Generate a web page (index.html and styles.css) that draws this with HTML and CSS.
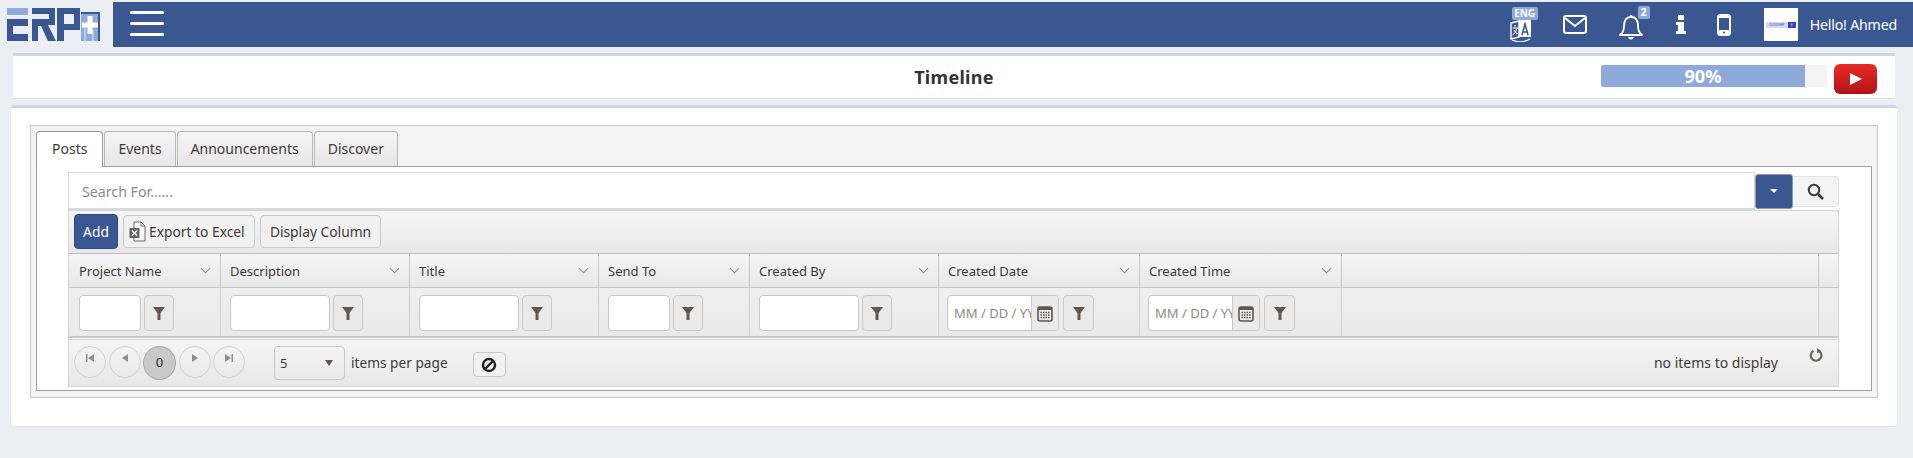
FILE: index.html
```html
<!DOCTYPE html>
<html lang="en">

<head>
    <meta charset="UTF-8">
    <title>Timeline</title>
    <link rel="stylesheet" href="styles.css">
</head>

<body>
    <header class="topbar">
        <div class="logo-box">
            <svg width="94" height="34" viewBox="0 0 94 34">
                <rect x="0" y="0" width="21" height="7" fill="#8eaadb"/>
                <path d="M0 11H21V18H6V26H21V33H0Z" fill="#3a5791"/>
                <path d="M25 0H48V17H41L49 33H41L34 18H31V33H25V11H42V6H25Z" fill="#3a5791"/>
                <path d="M50 0H73V22H57V33H50ZM57 6V16H67V6Z" fill="#3a5791"/>
                <rect x="74" y="4" width="19" height="29" fill="#8eaadb"/>
                <rect x="74" y="4" width="19" height="2" fill="#3a5791"/>
                <rect x="91" y="4" width="2" height="29" fill="#3a5791"/>
                <rect x="77" y="20" width="2" height="13" fill="#bccdec"/>
                <rect x="85" y="22" width="2" height="11" fill="#bccdec"/>
                <path d="M83 8V26M75 17H91" stroke="#fff" stroke-width="5" fill="none"/>
            </svg>
        </div>
        <div class="navbar">
            <button class="burger"><span></span><span></span><span></span></button>
            <div class="nav-right">
                <div class="nav-icon lang-icon">
                    <svg width="24" height="28" viewBox="0 0 24 28">
                        <path d="M2 9L10 7V23L2 25Z" fill="none" stroke="#fff" stroke-width="1.4"/>
                        <path d="M10 6H22V23H10Z" fill="#fff"/>
                        <path d="M3.5 14H9M6 11V13M8 14Q7 19 3.5 21M5 16Q6 19 9 20" fill="none" stroke="#fff" stroke-width="1"/>
                        <path d="M13 21L16 10L19 21M14 18H18" fill="none" stroke="#3a5791" stroke-width="1.6"/>
                        <path d="M3 26Q12 30 21 25" fill="none" stroke="#fff" stroke-width="1.2"/>
                    </svg>
                    <span class="badge badge-eng">ENG</span>
                </div>
                <div class="nav-icon mail-icon">
                    <svg width="24" height="20" viewBox="0 0 24 20">
                        <rect x="1" y="1" width="22" height="17" rx="2" fill="none" stroke="#fff" stroke-width="2"/>
                        <path d="M2 3L12 11L22 3" fill="none" stroke="#fff" stroke-width="2"/>
                    </svg>
                </div>
                <div class="nav-icon bell-icon">
                    <svg width="24" height="25" viewBox="0 0 24 25">
                        <path d="M12 2Q19 2 19 11Q19 17 23 20H1Q5 17 5 11Q5 2 12 2Z" fill="none" stroke="#fff" stroke-width="1.8" stroke-linejoin="round"/>
                        <path d="M9 22H15Q14 24.500 12 24.500Q10 24.500 9 22Z" fill="#fff"/>
                        <circle cx="12" cy="1.500" r="1.500" fill="#fff"/>
                    </svg>
                    <span class="badge badge-bell">2</span>
                </div>
                <div class="nav-icon info-icon">
                    <svg width="10" height="19" viewBox="0 0 10 19">
                        <rect x="2" y="0" width="6" height="5" fill="#fff"/>
                        <path d="M0 7H8V16H10V19H0V16H2V10H0Z" fill="#fff"/>
                    </svg>
                </div>
                <div class="nav-icon phone-icon">
                    <svg width="14" height="22" viewBox="0 0 14 22">
                        <rect x="1" y="1" width="12" height="20" rx="2.500" fill="none" stroke="#fff" stroke-width="2"/>
                        <rect x="1" y="16" width="12" height="5" rx="2" fill="#fff"/>
                        <rect x="1" y="1" width="12" height="3" rx="1.500" fill="#fff"/>
                        <circle cx="7" cy="18.500" r="1" fill="#3a5791"/>
                    </svg>
                </div>
                <div class="avatar"><span class="avatar-logo"><span>CLOUDERP</span><i>E</i></span></div>
                <span class="hello">Hello! Ahmed</span>
            </div>
        </div>
    </header>

    <section class="title-bar">
        <h1 class="page-title">Timeline</h1>
        <div class="progress"><div class="progress-fill">90%</div></div>
        <button class="yt-button">
            <svg width="12" height="12" viewBox="0 0 12 12"><path d="M0 0L12 6L0 12Z" fill="#fff"/></svg>
        </button>
    </section>

    <section class="card">
        <div class="tabstrip">
            <ul class="tabs">
                <li class="tab active">Posts</li>
                <li class="tab">Events</li>
                <li class="tab">Announcements</li>
                <li class="tab">Discover</li>
            </ul>
            <div class="tab-content">
                <div class="search-row">
                    <div class="search-input">Search For......</div>
                    <button class="drop-button"><i class="caret"></i></button>
                    <button class="search-button">
                        <svg width="17" height="17" viewBox="0 0 17 17">
                            <circle cx="7" cy="7" r="5.200" fill="none" stroke="#3c3c3c" stroke-width="2"/>
                            <path d="M11 11L16 16" stroke="#3c3c3c" stroke-width="2.600"/>
                        </svg>
                    </button>
                </div>
                <div class="grid">
                    <div class="toolbar">
                        <button class="btn btn-add">Add</button>
                        <button class="btn btn-export">
                            <svg width="17" height="21" viewBox="0 0 17 21">
                                <path d="M5 1H12L16 5V20H5Z" fill="#fff" stroke="#666" stroke-width="1"/>
                                <path d="M12 1V5H16" fill="none" stroke="#666"/>
                                <rect x="0.500" y="7" width="10" height="10" fill="#666"/>
                                <path d="M3 9.500L8 14.500M8 9.500L3 14.500" stroke="#fff" stroke-width="1.400"/>
                            </svg>
                            Export to Excel
                        </button>
                        <button class="btn btn-columns">Display Column</button>
                    </div>

                    <div class="head-row">
                        <div class="head-cell">Project Name<i class="chev"></i></div>
                        <div class="head-cell">Description<i class="chev"></i></div>
                        <div class="head-cell">Title<i class="chev"></i></div>
                        <div class="head-cell">Send To<i class="chev"></i></div>
                        <div class="head-cell">Created By<i class="chev"></i></div>
                        <div class="head-cell">Created Date<i class="chev"></i></div>
                        <div class="head-cell">Created Time<i class="chev"></i></div>
                        <div class="head-cell"></div>
                        <div class="head-cell"></div>
                    </div>

                    <div class="filter-row">
                        <div class="filter-cell first-cell">
                            <span class="f-input w62"></span>
                            <button class="f-btn"><svg class="funnel" viewBox="0 0 12 13"><path d="M0 0H12L7.500 6V13H4.500V6Z"/></svg></button>
                        </div>
                        <div class="filter-cell">
                            <span class="f-input w100"></span>
                            <button class="f-btn"><svg class="funnel" viewBox="0 0 12 13"><path d="M0 0H12L7.500 6V13H4.500V6Z"/></svg></button>
                        </div>
                        <div class="filter-cell">
                            <span class="f-input w100"></span>
                            <button class="f-btn"><svg class="funnel" viewBox="0 0 12 13"><path d="M0 0H12L7.500 6V13H4.500V6Z"/></svg></button>
                        </div>
                        <div class="filter-cell">
                            <span class="f-input w62"></span>
                            <button class="f-btn"><svg class="funnel" viewBox="0 0 12 13"><path d="M0 0H12L7.500 6V13H4.500V6Z"/></svg></button>
                        </div>
                        <div class="filter-cell">
                            <span class="f-input w100"></span>
                            <button class="f-btn"><svg class="funnel" viewBox="0 0 12 13"><path d="M0 0H12L7.500 6V13H4.500V6Z"/></svg></button>
                        </div>
                        <div class="filter-cell date-cell">
                            <span class="date-input"><input class="date-text" placeholder="MM / DD / YYYY"><span class="cal"><svg class="cal-icon" viewBox="0 0 16 17"><rect x="1" y="2" width="14" height="14" rx="2" fill="none" stroke="#5e5753" stroke-width="1.600"/><rect x="1" y="2" width="14" height="3" fill="#5e5753"/><path d="M3.500 7.500H12.500M3.500 10H12.500M3.500 12.500H12.500" stroke="#5e5753" stroke-width="1.500" stroke-dasharray="1.500 1"/></svg></span></span>
                            <button class="f-btn"><svg class="funnel" viewBox="0 0 12 13"><path d="M0 0H12L7.500 6V13H4.500V6Z"/></svg></button>
                        </div>
                        <div class="filter-cell date-cell">
                            <span class="date-input"><input class="date-text" placeholder="MM / DD / YYYY"><span class="cal"><svg class="cal-icon" viewBox="0 0 16 17"><rect x="1" y="2" width="14" height="14" rx="2" fill="none" stroke="#5e5753" stroke-width="1.600"/><rect x="1" y="2" width="14" height="3" fill="#5e5753"/><path d="M3.500 7.500H12.500M3.500 10H12.500M3.500 12.500H12.500" stroke="#5e5753" stroke-width="1.500" stroke-dasharray="1.500 1"/></svg></span></span>
                            <button class="f-btn"><svg class="funnel" viewBox="0 0 12 13"><path d="M0 0H12L7.500 6V13H4.500V6Z"/></svg></button>
                        </div>
                        <div class="filter-cell"></div>
                        <div class="filter-cell"></div>
                    </div>

                    <div class="pager">
                        <div class="pager-nums">
                            <button class="circle"><svg class="arrow" viewBox="0 0 8 8"><path d="M0 0H1.500V8H0ZM8 0V8L2 4Z"/></svg></button>
                            <button class="circle"><svg class="arrow" viewBox="0 0 8 8"><path d="M7 0V8L1 4Z"/></svg></button>
                            <button class="circle current">0</button>
                            <button class="circle"><svg class="arrow" viewBox="0 0 8 8"><path d="M1 0V8L7 4Z"/></svg></button>
                            <button class="circle"><svg class="arrow" viewBox="0 0 8 8"><path d="M8 0H6.500V8H8ZM0 0V8L6 4Z"/></svg></button>
                        </div>
                        <div class="page-size"><span>5</span><i class="size-caret"></i></div>
                        <span class="per-page">items per page</span>
                        <button class="clear-button">
                            <svg width="16" height="16" viewBox="0 0 16 16"><circle cx="8" cy="8" r="6" fill="none" stroke="#222" stroke-width="2.400"/><path d="M4 12L12 4" stroke="#222" stroke-width="2.400"/></svg>
                        </button>
                        <span class="no-items">no items to display</span>
                        <svg class="refresh" width="14" height="14" viewBox="0 0 14 14"><path d="M4.500 2.800A5.300 5.300 0 1 0 9 2.500" fill="none" stroke="#6b6663" stroke-width="2.200"/><path d="M8 0L12 3L8 5.500Z" fill="#6b6663"/></svg>
                    </div>
                </div>
            </div>
        </div>
    </section>
</body>

</html>
```

FILE: styles.css
```css
* {
    margin: 0;
    padding: 0;
    box-sizing: border-box;
}

body {
    background-color: #ebeef3;
    font-family: "Noto Sans", sans-serif;
    font-size: 14px;
    color: #3f3a38;
    height: 458px;
    overflow: hidden;
    padding-top: 2px;
}

button {
    font-family: inherit;
    font-size: inherit;
    color: inherit;
}

/* Top bar */
.topbar {
    display: flex;
    height: 45px;
}

.logo-box {
    width: 113px;
    padding: 6px 0 0 7px;
}

.navbar {
    flex: 1;
    display: flex;
    justify-content: space-between;
    align-items: center;
    background-color: #3a5791;
    padding: 0 16px 0 17px;
}

.burger {
    display: flex;
    flex-direction: column;
    gap: 8px;
    width: 34px;
    margin-bottom: 11px;
    margin-top: -1px;
    background: none;
    border: 0;
    padding-top: 9px;
}

.burger span {
    display: block;
    height: 3px;
    background-color: #fff;
    border-radius: 2px;
}

.nav-right {
    display: flex;
    align-items: center;
}

.nav-icon {
    position: relative;
    display: flex;
    align-items: center;
}

.lang-icon {
    margin-right: 30px;
    margin-top: 6px;
}

.mail-icon {
    margin-right: 32px;
}

.bell-icon {
    margin-right: 33px;
    margin-top: 5px;
}

.info-icon {
    margin-right: 31px;
}

.phone-icon {
    margin-right: 33px;
}

.badge {
    position: absolute;
    background-color: #8eaadb;
    color: #fff;
    font-size: 10px;
    font-weight: 700;
    line-height: 13px;
    text-align: center;
    border-radius: 2px;
}

.badge-eng {
    left: 3px;
    top: -7px;
    width: 26px;
}

.badge-bell {
    left: 19px;
    top: -9px;
    width: 12px;
}

.avatar {
    width: 34px;
    height: 33px;
    background-color: #fff;
    margin-right: 12px;
    display: flex;
    align-items: center;
    justify-content: center;
}

.avatar-logo {
    display: flex;
    width: 30px;
    height: 6px;
    font-size: 3px;
    line-height: 6px;
    color: #3341b5;
    background-color: #d5d9f3;
    overflow: hidden;
}

.avatar-logo span {
    flex: 1;
    text-align: center;
}

.avatar-logo i {
    width: 8px;
    background-color: #3341c5;
    color: #fff;
    font-style: normal;
    text-align: center;
}

.hello {
    color: #fff;
    font-size: 14.200px;
    letter-spacing: -0.2px;
    white-space: nowrap;
}

/* Title row */
.title-bar {
    position: relative;
    height: 46px;
    margin: 6px 18px 0 13px;
    background-color: #fff;
    border-top: 3px solid #d0d5de;
    border-bottom: 1px solid #dfe2e8;
    display: flex;
    align-items: center;
    padding-right: 18px;
    justify-content: flex-end;
}

.page-title {
    position: absolute;
    left: 0;
    right: 0;
    top: 9px;
    text-align: center;
    font-size: 18px;
    line-height: 24px;
    color: #333;
    font-weight: 700;
    letter-spacing: 0.3px;
}

.progress {
    width: 226px;
    height: 22px;
    margin-right: 7px;
    margin-top: -3px;
    background-color: #f3f3f3;
}

.progress-fill {
    width: 204px;
    height: 22px;
    background-color: #8eaadb;
    border-radius: 2px 0 0 2px;
    line-height: 22px;
    text-align: center;
    font-size: 18px;
    font-weight: 700;
    color: #fff;
}

.yt-button {
    width: 43px;
    height: 30px;
    margin-top: 3px;
    border: 0;
    border-radius: 6px;
    background: linear-gradient(#e52d27, #b31217);
    display: flex;
    align-items: center;
    justify-content: center;
}

/* Main card */
.card {
    height: 321px;
    margin: 6px 16px 0 11px;
    background-color: #fff;
    border-top: 3px solid #d0d5de;
    border-radius: 4px;
    box-shadow: 0 1px 1px #dfe2e8;
    padding: 17px 19px 0 19px;
}

.tabstrip {
    height: 273px;
    background-color: #f3f3f3;
    border: 1px solid #c8c8c8;
    padding: 5px 5px 6px 5px;
    display: flex;
    flex-direction: column;
}

.tabs {
    display: flex;
    list-style: none;
    height: 35px;
    position: relative;
    z-index: 1;
}

.tab {
    padding: 7px 13px 0;
    margin-right: 1px;
    background: linear-gradient(#f5f5f5, #e8e7e7);
    border: 1px solid #b8b8b8;
    border-bottom: 0;
    border-radius: 4px 4px 0 0;
    color: #3f3a38;
    font-size: 14px;
}

.tab.active {
    background: #fff;
    height: 36px;
    border-color: #999;
    padding: 7px 15px 0;
}

.tab-content {
    flex: 1;
    background-color: #fff;
    border: 1px solid #a0a0a0;
    padding: 5px 32px 0 31px;
}

.search-row {
    display: flex;
    align-items: center;
    height: 38px;
    margin-right: -1px;
}

.search-input {
    width: 1687px;
    height: 38px;
    border: 1px solid #d5d9e0;
    border-bottom-width: 2px;
    padding: 0 13px;
    line-height: 38px;
    color: #8a8a8a;
    font-size: 14.200px;
}

.drop-button {
    width: 38px;
    height: 35px;
    border: 1px solid #8c98b0;
    border-radius: 3px;
    background-color: #3a5791;
    display: flex;
    align-items: center;
    justify-content: center;
}

.caret {
    border-left: 4px solid transparent;
    border-right: 4px solid transparent;
    border-top: 4px solid #fff;
}

.search-button {
    width: 46px;
    height: 31px;
    border: 1px solid #e2e2e2;
    border-left: 0;
    border-radius: 0 4px 4px 0;
    background-color: #f3f3f3;
    display: flex;
    align-items: center;
    justify-content: center;
}

.grid {
    width: 1771px;
    height: 177px;
    border: 1px solid #d5d5d5;
    border-top: 0;
    display: flex;
    flex-direction: column;
}

.toolbar {
    display: flex;
    align-items: center;
    gap: 5px;
    height: 44px;
    padding: 0 0 2px 5px;
    background: linear-gradient(#f5f5f5, #e9e8e8);
    border-top: 1px solid #d5d5d5;
    border-bottom: 1px solid #bdbdbd;
}

.btn {
    height: 33px;
    padding: 0 8px;
    border: 1px solid #c9c9c9;
    border-radius: 4px;
    background-color: #f1f1f1;
    font-size: 13.800px;
    display: flex;
    align-items: center;
    gap: 3px;
    white-space: nowrap;
}

.btn-add {
    width: 44px;
    height: 35px;
    justify-content: center;
    padding: 0;
    background-color: #3a5791;
    border-color: #31497a;
    color: #fff;
}

.btn-export {
    width: 132px;
    padding: 0 5px;
}

.btn-columns {
    width: 121px;
    justify-content: center;
    padding: 0;
}

.head-row,
.filter-row {
    display: grid;
    grid-template-columns: 152px 189px 189px 151px 189px 201px 202px 1fr 19px;
}

.head-row {
    height: 34px;
    border-bottom: 1px solid #c8c8c8;
    background: linear-gradient(#f5f5f5, #e9e8e8);
}

.head-cell {
    position: relative;
    border-right: 1px solid #c8c8c8;
    padding-left: 9px;
    line-height: 34px;
    font-size: 13px;
    white-space: nowrap;
}

.head-cell:first-child {
    padding-left: 10px;
}

.head-cell:last-child {
    border-right: 0;
}

.chev {
    position: absolute;
    right: 11px;
    top: 11px;
    width: 7px;
    height: 7px;
    border-right: 1.500px solid #8f8f8f;
    border-bottom: 1.500px solid #8f8f8f;
    transform: rotate(45deg);
}

.filter-row {
    height: 50px;
    background: linear-gradient(#f0efef, #ebeaea);
    border-bottom: 2px solid #c8c8c8;
}

.filter-cell {
    display: flex;
    gap: 3px;
    align-items: flex-start;
    padding: 7px 0 0 9px;
    border-right: 1px solid #d0d0d0;
}

.first-cell {
    padding-left: 10px;
}

.date-cell {
    padding-left: 8px;
    gap: 4px;
}

.date-cell .f-btn {
    width: 31px;
}

.filter-cell:last-child {
    border-right: 0;
}

.f-input {
    height: 36px;
    background-color: #fff;
    border: 1px solid #c9c9c9;
    border-radius: 4px;
}

.w62 {
    width: 62px;
}

.w100 {
    width: 100px;
}

.f-btn {
    width: 30px;
    height: 36px;
    border: 1px solid #c9c9c9;
    border-radius: 4px;
    background-color: #ebeaea;
    display: flex;
    align-items: center;
    justify-content: center;
}

.funnel {
    width: 12px;
    height: 13px;
    fill: #5e5753;
}

.date-input {
    display: flex;
    width: 112px;
    height: 36px;
    background-color: #fff;
    border: 1px solid #c9c9c9;
    border-radius: 4px;
    overflow: hidden;
}

.date-text {
    width: 83px;
    padding-left: 6px;
    border: 0;
    outline: none;
    background: transparent;
    font-family: inherit;
    font-size: 13px;
}

.date-text::placeholder {
    color: #8a8a8a;
    opacity: 1;
}

.cal {
    flex: 1;
    display: flex;
    align-items: center;
    justify-content: center;
    background-color: #ebeaea;
    border-left: 1px solid #c9c9c9;
}

.cal-icon {
    width: 16px;
    height: 17px;
}

.pager {
    flex: 1;
    display: flex;
    align-items: flex-start;
    padding: 6px 0 0 5px;
    margin-top: 1px;
    background: linear-gradient(#f5f5f5, #e9e8e8);
    border-top: 1px solid #d5d5d5;
    position: relative;
}

.pager-nums {
    display: flex;
    gap: 2.500px;
    width: 200px;
}

.circle {
    width: 32px;
    height: 32px;
    border: 1px solid #d2d2d2;
    border-radius: 50%;
    background: transparent;
    font-size: 13px;
    display: flex;
    align-items: flex-start;
    justify-content: center;
    padding-top: 7px;
}

.circle.current {
    background-color: #c9c9c9;
    border-color: #a9a9a9;
    width: 33px;
    height: 34px;
    padding-top: 6px;
    color: #222;
}

.arrow {
    width: 8px;
    height: 8px;
    fill: #8f8f8f;
}

.page-size {
    display: flex;
    align-items: center;
    justify-content: space-between;
    width: 71px;
    height: 34px;
    padding: 0 11px 0 5px;
    border: 1px solid #c9c9c9;
    border-radius: 4px;
    font-size: 13px;
}

.size-caret {
    border-left: 4px solid transparent;
    border-right: 4px solid transparent;
    border-top: 6px solid #5e5753;
}

.per-page {
    margin-left: 6px;
    line-height: 33px;
    font-size: 13.700px;
}

.clear-button {
    width: 33px;
    height: 25px;
    margin: 6px 0 0 25px;
    border: 1px solid #c9c9c9;
    border-radius: 4px;
    background-color: #f1f1f1;
    display: flex;
    align-items: center;
    justify-content: center;
}

.no-items {
    margin-left: auto;
    margin-right: 60px;
    font-size: 14px;
    line-height: 33px;
}

/* sits in the corner over the pager */
.refresh {
    position: absolute;
    right: 15px;
    top: 8px;
}
```
